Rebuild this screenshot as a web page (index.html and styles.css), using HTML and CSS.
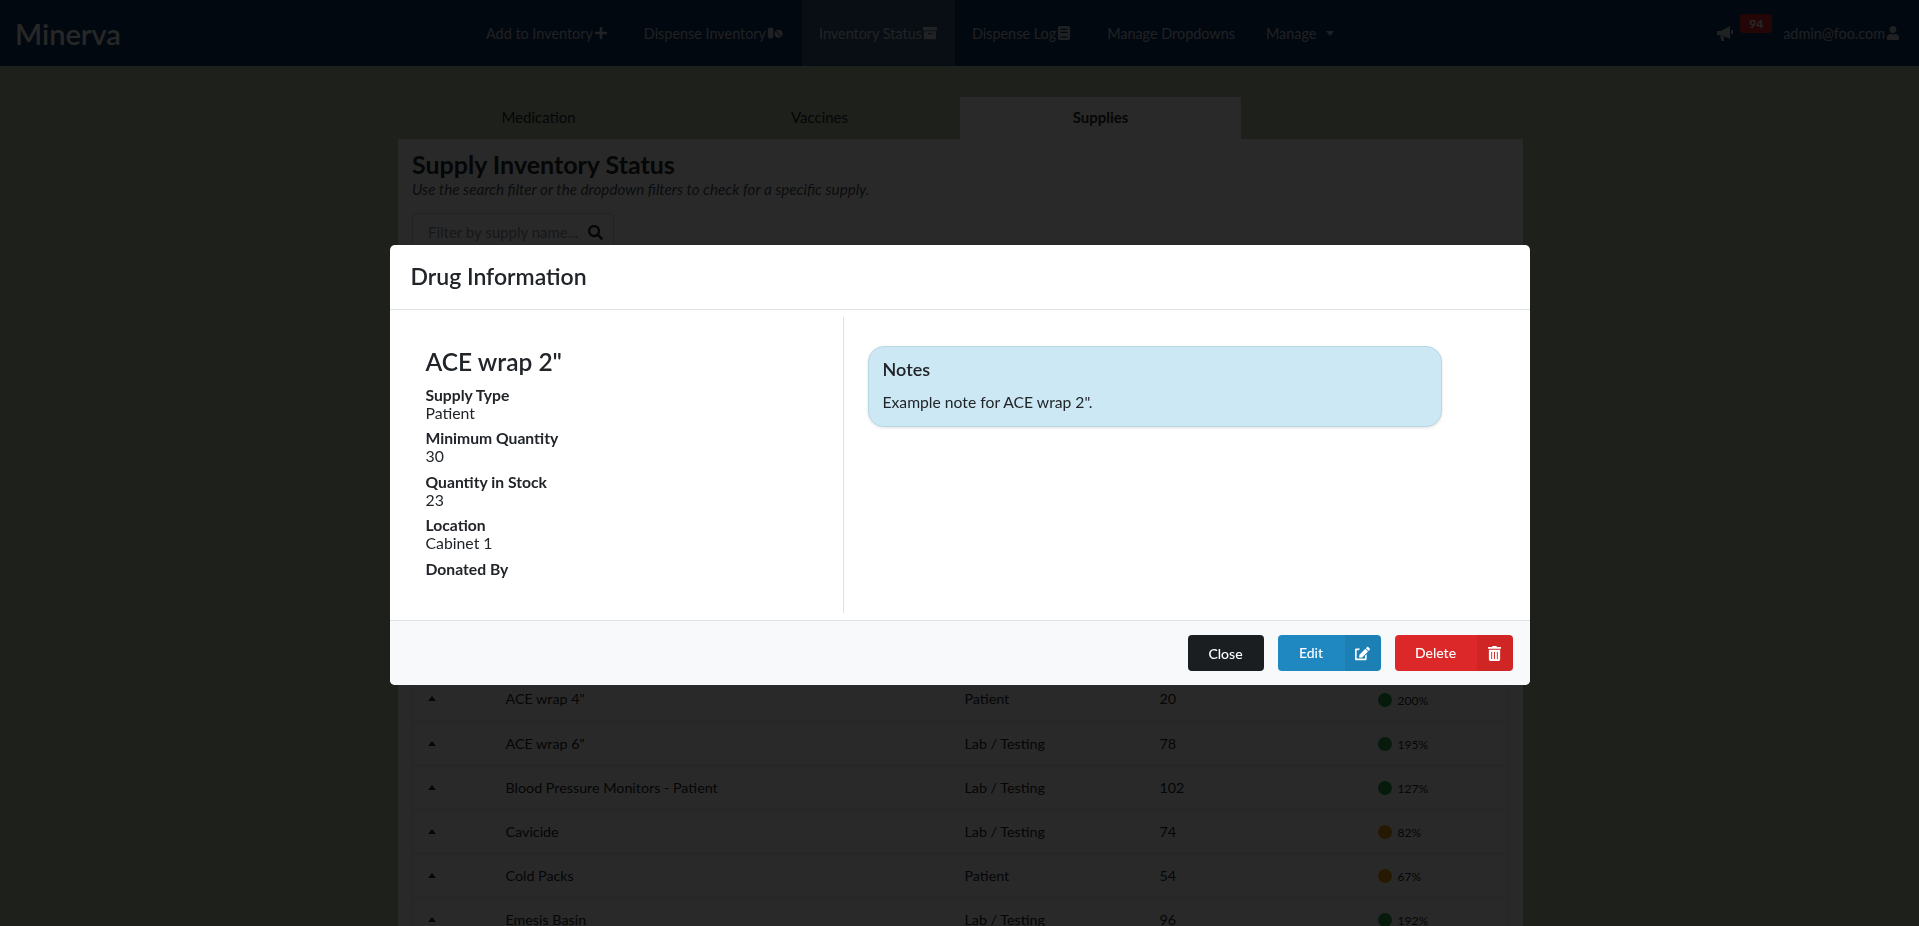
FILE: index.html
```html
<!DOCTYPE html>
<html lang="en">
<head>
    <meta charset="UTF-8">
    <meta name="viewport" content="width=device-width, initial-scale=1.0">
    <title>Minerva</title>
    <link rel="stylesheet" href="styles.css">
</head>
<body>

    <nav class="navbar">
        <a class="brand">Minerva</a>
        <ul class="nav-links">
            <li class="nav-item">Add to Inventory
                <svg class="icon" viewBox="0 0 448 512"><path d="M416 208H272V64c0-17.67-14.33-32-32-32h-32c-17.67 0-32 14.33-32 32v144H32c-17.67 0-32 14.33-32 32v32c0 17.67 14.33 32 32 32h144v144c0 17.67 14.33 32 32 32h32c17.67 0 32-14.33 32-32V304h144c17.67 0 32-14.33 32-32v-32c0-17.67-14.33-32-32-32z"/></svg>
            </li>
            <li class="nav-item">Dispense Inventory
                <svg class="icon icon-wide" viewBox="0 0 20 16"><rect x="1" y="1" width="7" height="14" rx="3.5"/><circle cx="14.5" cy="9" r="5"/><path d="M11 5.5l7 7" stroke="#020810" stroke-width="1.2"/></svg>
            </li>
            <li class="nav-item active">Inventory Status
                <svg class="icon" viewBox="0 0 16 16"><path d="M0 1h16v4H0z"/><path d="M1 6h14v9H1zM5.5 8v1.5h5V8z" fill-rule="evenodd"/></svg>
            </li>
            <li class="nav-item">Dispense Log
                <svg class="icon" viewBox="0 0 14 16"><path d="M2 0h10a2 2 0 0 1 2 2v12a2 2 0 0 1-2 2H2a2 2 0 0 1-2-2V2a2 2 0 0 1 2-2zM3 3v1.5h8V3zM3 6.5V8h8V6.5zM3 12v1.5h8V12z" fill-rule="evenodd"/></svg>
            </li>
            <li class="nav-item plain">Manage Dropdowns</li>
            <li class="nav-item">Manage <span class="caret"></span></li>
        </ul>
        <div class="nav-right">
            <svg class="bullhorn" viewBox="0 0 18 18"><path d="M1 7h4l9-5v13L5 11H1z"/><path d="M4 11.500h3l1.500 5.500H5.500z"/><path d="M15 6h2v4h-2z"/></svg>
            <span class="nav-badge">94</span>
            <span class="nav-user">admin@foo.com
                <svg class="icon" viewBox="0 0 448 512"><path d="M224 256c70.700 0 128-57.300 128-128S294.700 0 224 0 96 57.300 96 128s57.300 128 128 128zm89.600 32h-16.700c-22.200 10.200-46.900 16-72.900 16s-50.600-5.800-72.900-16h-16.700C60.200 288 0 348.200 0 422.400V464c0 26.500 21.500 48 48 48h352c26.500 0 48-21.500 48-48v-41.600c0-74.200-60.200-134.400-134.400-134.400z"/></svg>
            </span>
        </div>
    </nav>

    <main class="page">
        <div class="tabs">
            <a class="tab">Medication</a>
            <a class="tab">Vaccines</a>
            <a class="tab selected">Supplies</a>
        </div>
        <section class="panel">
            <h2 class="panel-title">Supply Inventory Status</h2>
            <p class="panel-sub">Use the search filter or the dropdown filters to check for a specific supply.</p>
            <div class="search-box">
                <span>Filter by supply name...</span>
                <svg class="search-icon" viewBox="0 0 512 512"><path d="M505 442.700L405.300 343c-4.500-4.500-10.600-7-17-7H372c27.600-35.300 44-79.700 44-128C416 93.100 322.900 0 208 0S0 93.100 0 208s93.100 208 208 208c48.300 0 92.700-16.400 128-44v16.300c0 6.400 2.500 12.500 7 17l99.700 99.700c9.400 9.400 24.600 9.400 33.900 0l28.300-28.300c9.400-9.400 9.400-24.600.1-34zM208 336c-70.700 0-128-57.200-128-128 0-70.700 57.200-128 128-128 70.700 0 128 57.200 128 128 0 70.700-57.200 128-128 128z"/></svg>
            </div>
            <table class="stock-table">
                <colgroup>
                    <col class="col-caret"><col class="col-name"><col class="col-type"><col class="col-qty"><col class="col-status">
                </colgroup>
                <tbody>
                    <tr><td><span class="row-caret"></span></td><td>ACE wrap 4"</td><td>Patient</td><td>20</td><td><span class="dot green"></span><small>200%</small></td></tr>
                    <tr><td><span class="row-caret"></span></td><td>ACE wrap 6"</td><td>Lab / Testing</td><td>78</td><td><span class="dot green"></span><small>195%</small></td></tr>
                    <tr><td><span class="row-caret"></span></td><td>Blood Pressure Monitors - Patient</td><td>Lab / Testing</td><td>102</td><td><span class="dot green"></span><small>127%</small></td></tr>
                    <tr><td><span class="row-caret"></span></td><td>Cavicide</td><td>Lab / Testing</td><td>74</td><td><span class="dot amber"></span><small>82%</small></td></tr>
                    <tr><td><span class="row-caret"></span></td><td>Cold Packs</td><td>Patient</td><td>54</td><td><span class="dot amber"></span><small>67%</small></td></tr>
                    <tr><td><span class="row-caret"></span></td><td>Emesis Basin</td><td>Lab / Testing</td><td>96</td><td><span class="dot green"></span><small>192%</small></td></tr>
                </tbody>
            </table>
        </section>
    </main>

    <div class="backdrop"></div>

    <div class="modal-wrap">
        <div class="modal">
            <div class="modal-header">
                <h5 class="modal-title">Drug Information</h5>
            </div>
            <div class="modal-body">
                <div class="info-col">
                    <h3 class="item-name">ACE wrap 2"</h3>
                    <div class="field"><strong>Supply Type</strong><span>Patient</span></div>
                    <div class="field"><strong>Minimum Quantity</strong><span>30</span></div>
                    <div class="field"><strong>Quantity in Stock</strong><span>23</span></div>
                    <div class="field"><strong>Location</strong><span>Cabinet 1</span></div>
                    <div class="field"><strong>Donated By</strong></div>
                </div>
                <div class="notes-col">
                    <div class="notes">
                        <h5>Notes</h5>
                        <p>Example note for ACE wrap 2".</p>
                    </div>
                </div>
            </div>
            <div class="modal-footer">
                <button class="btn btn-close">Close</button>
                <button class="btn btn-edit">
                    <span class="btn-label">Edit</span>
                    <span class="btn-icon"><svg viewBox="0 0 576 512"><path d="M402.600 83.200l90.200 90.200c3.800 3.800 3.800 10 0 13.800L274.400 405.600l-92.800 10.300c-12.400 1.400-22.900-9.100-21.500-21.500l10.300-92.800L388.800 83.200c3.800-3.800 10-3.800 13.800 0zm162-22.900l-48.800-48.800c-15.200-15.200-39.900-15.200-55.200 0l-35.400 35.400c-3.800 3.800-3.800 10 0 13.800l90.200 90.200c3.800 3.800 10 3.800 13.800 0l35.400-35.400c15.200-15.300 15.200-40 0-55.200zM384 346.200V448H64V128h73.200c3.200 0 6.200-1.300 8.500-3.500l40-40c7.600-7.600 2.200-20.500-8.500-20.500H48C21.500 64 0 85.500 0 112v352c0 26.500 21.500 48 48 48h352c26.500 0 48-21.500 48-48V306.200c0-10.700-12.900-16-20.500-8.500l-40 40c-2.200 2.300-3.500 5.300-3.500 8.500z"/></svg></span>
                </button>
                <button class="btn btn-delete">
                    <span class="btn-label">Delete</span>
                    <span class="btn-icon"><svg viewBox="0 0 448 512"><path d="M32 464a48 48 0 0 0 48 48h288a48 48 0 0 0 48-48V128H32zm272-256a16 16 0 0 1 32 0v224a16 16 0 0 1-32 0zm-96 0a16 16 0 0 1 32 0v224a16 16 0 0 1-32 0zm-96 0a16 16 0 0 1 32 0v224a16 16 0 0 1-32 0zM432 32H312l-9.400-18.700A24 24 0 0 0 281.100 0H166.800a23.720 23.720 0 0 0-21.400 13.300L136 32H16A16 16 0 0 0 0 48v32a16 16 0 0 0 16 16h416a16 16 0 0 0 16-16V48a16 16 0 0 0-16-16z"/></svg></span>
                </button>
            </div>
        </div>
    </div>

</body>
</html>
```

FILE: styles.css
```css
* {
    box-sizing: border-box;
}
html, body {
    height: 100%;
}
body {
    margin: 0;
    overflow: hidden;
    font-family: Lato, "Open Sans", sans-serif;
    font-size: 15px;
    color: #212529;
    background-color: #bcc8a9;
}

/* navbar */
.navbar {
    display: flex;
    align-items: center;
    height: 66px;
    padding: 0 19px 0 15px;
    background-color: #0d3264;
    color: rgba(255, 255, 255, 0.75);
    font-size: 14.4px;
}
.brand {
    font-size: 29px;
    font-weight: 600;
    color: #eee;
    width: 454px;
}
.nav-links {
    display: flex;
    align-self: stretch;
    margin: 0;
    padding: 0;
    list-style: none;
}
.nav-item {
    display: flex;
    align-items: center;
    gap: 1px;
    padding: 0 19px 0 17px;
}
.nav-item.plain {
    padding-right: 14px;
}
.nav-item.active {
    padding-right: 18px;
    background-color: rgba(255, 255, 255, 0.18);
}
.icon {
    width: 14px;
    height: 14px;
    fill: currentColor;
}
.icon-wide {
    width: 16px;
}
.caret {
    display: inline-block;
    margin-left: 9px;
    border-left: 4px solid transparent;
    border-right: 4px solid transparent;
    border-top: 5px solid currentColor;
}
.nav-right {
    display: flex;
    align-items: center;
    align-self: stretch;
    margin-left: auto;
}
.bullhorn {
    width: 18px;
    height: 18px;
    fill: currentColor;
}
.nav-badge {
    align-self: flex-start;
    width: 32px;
    height: 19px;
    margin: 14px 0 0 6px;
    border-radius: 3px;
    background-color: #dc2828;
    color: #fff;
    font-size: 12px;
    font-weight: 700;
    line-height: 19px;
    text-align: center;
}
.nav-user {
    display: flex;
    align-items: center;
    gap: 1px;
    margin-left: 11px;
}

/* page behind the modal */
.page {
    width: 1125px;
    margin: 31px 0 0 398px;
}
.tabs {
    display: flex;
    width: 843px;
}
.tab {
    flex: 1;
    height: 42px;
    line-height: 40px;
    text-align: center;
}
.tab.selected {
    background-color: #fff;
    font-weight: 700;
}
.panel {
    height: 800px;
    padding: 10px 15px 0 14px;
    background-color: #fff;
}
.panel-title {
    margin: 0;
    font-size: 25px;
    line-height: 30px;
}
.panel-sub {
    margin: 0;
    font-size: 15.2px;
    font-style: italic;
    line-height: 20px;
    color: #495057;
}
.search-box {
    display: flex;
    align-items: center;
    justify-content: space-between;
    width: 202px;
    height: 38px;
    margin-top: 14px;
    padding: 0 10px 0 15px;
    border: 1px solid #ced4da;
    border-radius: 4px;
    color: #8a9199;
}
.search-icon {
    width: 15px;
    height: 15px;
    fill: #212529;
}
.stock-table {
    width: 1096px;
    margin-top: 426px;
    border-collapse: collapse;
    table-layout: fixed;
    border-left: 1px solid #dee2e6;
    border-right: 1px solid #dee2e6;
    font-size: 14.3px;
}
.col-caret { width: 81px; }
.col-name { width: 459px; }
.col-type { width: 195px; }
.col-qty { width: 219px; }
.col-status { width: 142px; }
.stock-table td {
    height: 44px;
    padding: 0 12px;
    border-bottom: 1px solid #dee2e6;
}
.row-caret {
    display: block;
    width: 0;
    margin-left: 3px;
    border-left: 4px solid transparent;
    border-right: 4px solid transparent;
    border-bottom: 5px solid #212529;
}
.dot {
    display: inline-block;
    width: 14px;
    height: 14px;
    margin: 0 6px 0 -1px;
    border-radius: 50%;
    vertical-align: middle;
}
.dot.green {
    background-color: #28a745;
}
.dot.amber {
    background-color: #e69c12;
}
small {
    font-size: 12px;
    vertical-align: middle;
}

/* modal */
.backdrop {
    position: fixed;
    inset: 0;
    background-color: rgba(0, 0, 0, 0.84);
}
.modal-wrap {
    position: fixed;
    inset: 0;
    padding-top: 245px;
}
.modal {
    display: flex;
    flex-direction: column;
    width: 1140px;
    height: 440px;
    margin: 0 auto;
    border-radius: 5px;
    background-color: #fff;
    overflow: hidden;
}
.modal-header {
    height: 65px;
    padding: 0 21px;
    border-bottom: 1px solid #dee2e6;
    line-height: 63px;
}
.modal-title {
    margin: 0;
    font-size: 23px;
    font-weight: 600;
}
.modal-body {
    display: flex;
    flex: 1;
    padding: 7px 8px;
}
.info-col {
    width: 446px;
    padding: 29px 0 0 28px;
    border-right: 1px solid #dee2e6;
}
.item-name {
    margin: 0 0 8px;
    font-size: 24.5px;
    font-weight: 600;
    line-height: 32px;
}
.field {
    margin-bottom: 7.4px;
    line-height: 18px;
}
.field strong {
    display: block;
    font-size: 15.7px;
}
.field span {
    display: block;
    font-size: 15.8px;
}
.notes-col {
    padding: 29px 0 0 24px;
}
.notes {
    width: 574px;
    height: 81px;
    padding: 11px 14px;
    border: 1px solid #b8d8e6;
    border-radius: 16px;
    background-color: #cce8f4;
    box-shadow: 0 1px 3px rgba(0, 0, 0, 0.12);
}
.notes h5 {
    margin: 0 0 12px;
    font-size: 18px;
    font-weight: 600;
    line-height: 22px;
}
.notes p {
    margin: 0;
    font-size: 15.7px;
    line-height: 20px;
}
.modal-footer {
    display: flex;
    justify-content: flex-end;
    align-items: center;
    gap: 14px;
    height: 65px;
    padding: 0 17px 0 0;
    border-top: 1px solid #dee2e6;
    background-color: #f8f9fb;
}
.btn {
    display: flex;
    height: 36px;
    padding: 0;
    border: none;
    border-radius: 4px;
    color: #fff;
    font-family: inherit;
    font-size: 14px;
    font-weight: 500;
    overflow: hidden;
}
.btn-close {
    width: 76px;
    align-items: center;
    justify-content: center;
    background-color: #1b1e21;
}
.btn-label {
    flex: 1;
    line-height: 35px;
}
.btn-icon {
    display: flex;
    align-items: center;
    justify-content: center;
    width: 36px;
    background-color: rgba(0, 0, 0, 0.06);
}
.btn-icon svg {
    width: 15px;
    height: 15px;
    fill: #fff;
}
.btn-edit {
    width: 103px;
    background-color: #1f88c0;
}
.btn-delete {
    width: 118px;
    background-color: #dc2828;
}
```
